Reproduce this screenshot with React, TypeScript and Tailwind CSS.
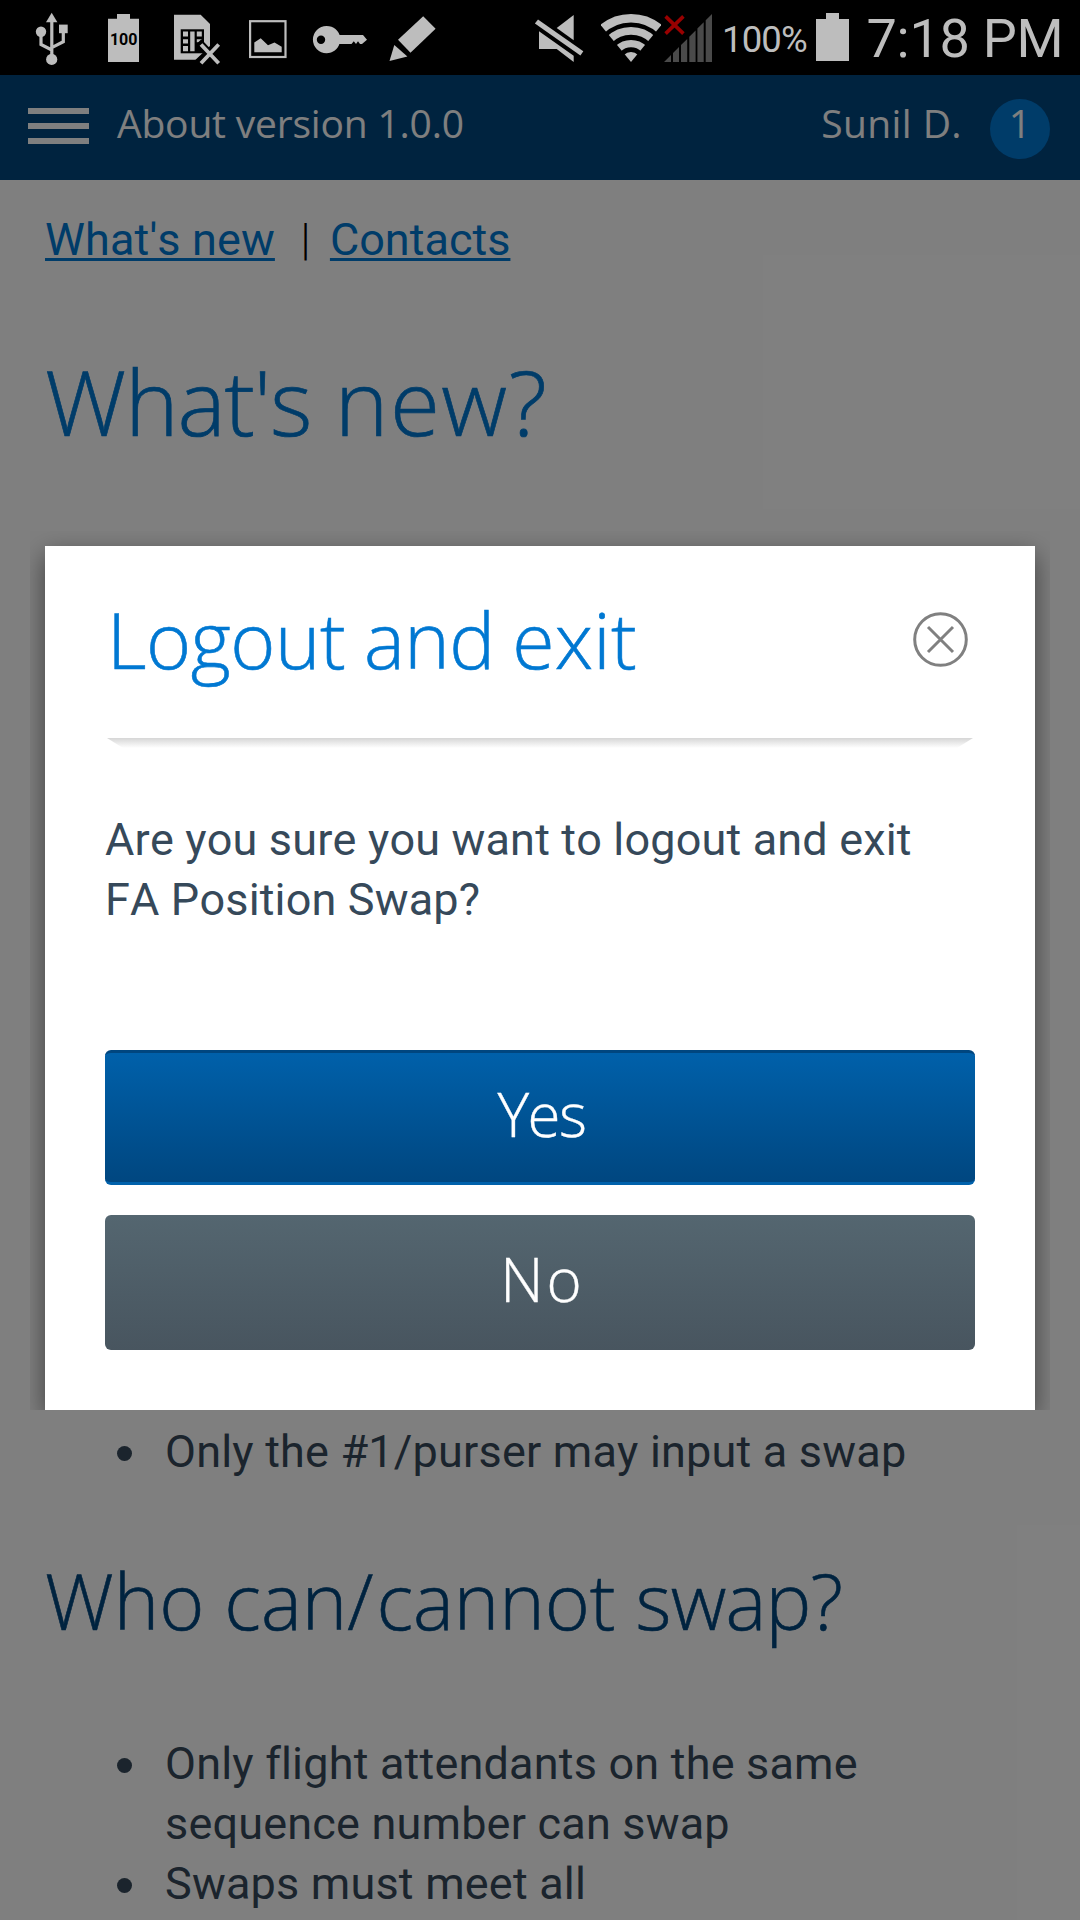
import React from "react";

type IconProps = { x: number; w: number; className?: string; children: React.ReactNode };

/* Status bar glyph: a slice of the 75px high bar, from x to x + w. */
function Glyph({ x, w, className = "", children }: IconProps) {
  return (
    <svg
      width={w}
      height={75}
      viewBox={`${x} 0 ${w} 75`}
      fill="#bdbdbd"
      className={`shrink-0 ${className}`}
      aria-hidden="true"
    >
      {children}
    </svg>
  );
}

function StatusBar() {
  return (
    <div className="flex h-[75px] items-start overflow-hidden bg-black pl-[35px] font-['Roboto',sans-serif] text-[#bdbdbd]">
      <Glyph x={35} w={34}>
        <path d="M51.7 12.7 57.4 22.3H46Z" />
        <path d="M51.8 20V56M41 33V44.5L51.8 50M63.3 30V41.7L51.8 47.6" fill="none" stroke="#bdbdbd" strokeWidth="3.2" />
        <circle cx="51.7" cy="59.4" r="5.6" />
        <circle cx="41" cy="31.8" r="5.2" />
        <rect x="59" y="24.6" width="8.7" height="8.6" />
      </Glyph>
      <Glyph x={107} w={34} className="ml-[38px]">
        <path d="M117 14H130V18.7H139V62H108V18.7H117Z" />
        <text x="123.7" y="45.4" textAnchor="middle" fontSize="16" fontWeight="700" fill="#000">100</text>
      </Glyph>
      <Glyph x={173} w={48} className="ml-[32px]">
        <path d="M174 14.7H200.7L210 24V54L196 59.8H174Z" />
        <rect x="180.7" y="29.3" width="23.3" height="24" fill="#000" />
        <path d="M183 31.5h5v5h-5zM183 39.3h5v4.2h-5zM183 46h5v5.2h-5zM190.2 31.5h4.4v19.7h-4.4zM196.8 31.5h5v5h-5zM196.8 39.3h5v3h-5z" />
        <path d="M198.5 42 220 65M220 42 196 65" stroke="#000" strokeWidth="8" />
        <path d="M201 44.5 218.7 63.2M218.7 44.5 201 63.2" stroke="#bdbdbd" strokeWidth="3.8" />
      </Glyph>
      <Glyph x={248} w={40} className="ml-[27px]">
        <rect x="250.1" y="21.2" width="35.4" height="35.8" fill="none" stroke="#bdbdbd" strokeWidth="2.2" />
        <path d="M254.3 52.3V42.5L260.7 38.2 268 45.2 274.5 42.6 281.7 46.8V52.3Z" />
      </Glyph>
      <Glyph x={312} w={56} className="ml-[24px]">
        <path
          fillRule="evenodd"
          d="M326.5 26C334 26 338.5 31 339.6 35H363L367 39.7 362 44H360L358 41.2 356 44 353.8 41.2 351.5 44H339.4C338 49 333 53.2 326.5 53.2A13.6 13.6 0 0 1 326.5 26ZM321 35.5A4.2 4.2 0 1 0 321 43.9A4.2 4.2 0 1 0 321 35.5Z"
        />
      </Glyph>
      <Glyph x={389} w={48} className="ml-[21px]">
        <path d="M398 39.7 423.2 16.3 435.6 28.7 410.5 52.7Z" />
        <path d="M394.3 45 407.4 56.5 389.5 61Z" />
      </Glyph>
      <Glyph x={534} w={51} className="ml-[97px]">
        <path d="M556.7 28 573.7 15V40.2Z" />
        <path d="M539 31.3 573.7 55.7V62L556.7 49H539Z" />
        <path d="M534.9 23.6 538 19.4 583.3 51.2 580.4 55.4Z" />
      </Glyph>
      <Glyph x={601} w={60} className="ml-[16px]">
        <clipPath id="wifi-wedge">
          <path d="M631 62 596 19.5V5H666V19.5Z" />
        </clipPath>
        <g clipPath="url(#wifi-wedge)" fill="none" stroke="#bdbdbd">
          <circle cx="631" cy="62" r="43.8" strokeWidth="8.6" />
          <circle cx="631" cy="62" r="31.2" strokeWidth="7.8" />
          <circle cx="631" cy="62" r="18.4" strokeWidth="7.4" />
          <circle cx="631" cy="62" r="5" strokeWidth="10" />
        </g>
      </Glyph>
      <Glyph x={663} w={50} className="ml-[2px]">
        <path
          fill="#4a4a4a"
          d="M664 62 671 55V62ZM673 62V53L679 47V62ZM681 62V45L687.2 39V62ZM689.3 62V36.7L695.6 30.4V62ZM697.4 62V28.6L703.7 22.3V62ZM705.7 62V20.3L712 14V62Z"
        />
        <path d="M665.6 16.4 683.4 33.6M683.4 16.4 665.6 33.6" stroke="#990000" strokeWidth="3.6" />
      </Glyph>
      <span className="ml-[9px] w-[94px] whitespace-nowrap text-[36.5px] leading-[79px] tracking-[-0.85px]">100%</span>
      <Glyph x={816} w={33}>
        <path d="M826 13H839V19H849V61H816V19H826Z" />
      </Glyph>
      <span className="ml-[17.5px] whitespace-nowrap text-[54px] leading-[77px] tracking-[-0.26px]">7:18 PM</span>
    </div>
  );
}

function Header() {
  return (
    <header className="flex h-[105px] items-start bg-[#00467f] pl-[28px] pr-[30px] font-['Open_Sans',sans-serif] text-[39px] text-white">
      <div className="mt-[33px] flex w-[61px] flex-col gap-[9px]">
        <span className="h-[6px] bg-white" />
        <span className="h-[6px] bg-white" />
        <span className="h-[6px] bg-white" />
      </div>
      <h1 className="ml-[28px] whitespace-nowrap leading-[96px] tracking-[-0.2px]">
        About version 1.0.0
      </h1>
      <span className="ml-auto whitespace-nowrap leading-[96px] tracking-[0.4px]">Sunil D.</span>
      <span className="ml-[28px] mt-[24px] h-[60px] w-[60px] rounded-full bg-[#0078d2] text-center leading-[48px]">1</span>
    </header>
  );
}

function Bullet({ children }: { children: React.ReactNode }) {
  return (
    <li className="flex items-start gap-[33px] pl-[72px] text-[45px] leading-[60px] tracking-[0.19px] text-[#36495a]">
      <span className="mt-[24px] h-[15px] w-[15px] shrink-0 rounded-full bg-[#36495a]" />
      <span>{children}</span>
    </li>
  );
}

function LogoutDialog() {
  return (
    <section
      role="dialog"
      className="mx-[45px] mt-[471px] flex h-[864px] flex-col bg-white px-[60px] pt-[53px] [box-shadow:0_9px_24px_rgba(0,0,0,0.5)] [clip-path:inset(-15px_-15px_0_-15px)]"
    >
      <div className="flex h-[80px] items-center justify-between pr-[7px]">
        <h2 className="whitespace-nowrap pl-[2px] pt-[2px] font-['Open_Sans',sans-serif] text-[77px] font-light leading-[80px] tracking-[-0.44px] text-[#0078d2] [-webkit-text-stroke:0.6px_#0078d2]">
          Logout <span className="-ml-[1px]">and</span> <span className="-ml-[2px] tracking-[0.2px]">exit</span>
        </h2>
        <button aria-label="Close" className="h-[55px] w-[55px]">
          <svg width="55" height="55" viewBox="0 0 55 55" fill="none" stroke="#808080" strokeWidth="3">
            <circle cx="27.5" cy="27.5" r="25.8" />
            <path d="M15 15 40 40M40 15 15 40" />
          </svg>
        </button>
      </div>
      <div className="mt-[59px] h-[10px] bg-linear-to-b from-[#d6d6d6] to-white [clip-path:polygon(2px_0,calc(100%-2px)_0,calc(100%-18px)_100%,18px_100%)]" />
      <p className="mt-[62px] whitespace-nowrap text-[45px] leading-[60px] tracking-[0.16px] text-[#36495a]">
        Are you sure you want to logout and exit
        <br />
        FA Position Swap?
      </p>
      <div className="mt-[120px] flex flex-col gap-[30px] font-['Open_Sans',sans-serif] text-[60px] font-light text-white">
        <button className="h-[135px] rounded-[6px] border-b-[3px] border-t-[3px] border-b-[#0061ab] border-t-[#00467f] bg-linear-to-b from-[#0061ab] to-[#00467f] bg-origin-border pb-[8px] pl-[3px] tracking-[-1.5px] [-webkit-text-stroke:0.4px_white]">
          Yes
        </button>
        <button className="h-[135px] rounded-[6px] bg-linear-to-b from-[#546670] to-[#48555f] pb-[8px] pl-[5px] tracking-[3px] [-webkit-text-stroke:0.4px_white]">
          No
        </button>
      </div>
    </section>
  );
}

export default function App() {
  return (
    <div className="h-[1920px] w-[1080px] overflow-hidden bg-white font-['Roboto',sans-serif] [font-kerning:none]">
      <StatusBar />
      <div className="relative h-[1845px] overflow-hidden">
        <Header />
        <main className="px-[45px] pt-[30px]">
          <nav className="flex h-[60px] text-[45px] leading-[60px] text-[#0078d2]">
            <a className="whitespace-nowrap tracking-[0.12px] underline decoration-[3px] underline-offset-[3px] [text-decoration-skip-ink:none]">What's new</a>
            <span className="w-[55px] pl-[6px] text-center font-light text-black">|</span>
            <a className="whitespace-nowrap underline decoration-[3px] underline-offset-[3px] [text-decoration-skip-ink:none]">Contacts</a>
          </nav>
          <h2 className="mt-[85px] whitespace-nowrap pt-[1px] font-['Open_Sans',sans-serif] text-[91px] font-light leading-[90px] text-[#0078d2] [-webkit-text-stroke:0.7px_#0078d2] [font-kerning:normal]">
            <span className="tracking-[-1.2px]">What's</span> <span className="tracking-[1.4px]">new?</span>
          </h2>
          <ul className="mt-[976px]">
            <Bullet>Only the #1/purser may input a swap</Bullet>
          </ul>
          <h3 className="mt-[77px] whitespace-nowrap pt-[2px] font-['Open_Sans',sans-serif] text-[77px] font-light leading-[80px] text-[#00467f] [-webkit-text-stroke:0.6px_#00467f] [font-kerning:normal]">
            Who <span>can/</span>
            <span className="ml-[3px]">cannot</span> <span className="tracking-[-0.8px]">swap?</span>
          </h3>
          <ul className="mt-[93px]">
            <Bullet>
              Only flight attendants on the same
              <br />
              sequence number can swap
            </Bullet>
            <Bullet>Swaps must meet all</Bullet>
          </ul>
        </main>
        <div className="absolute inset-0 bg-black/50">
          <LogoutDialog />
        </div>
      </div>
    </div>
  );
}
